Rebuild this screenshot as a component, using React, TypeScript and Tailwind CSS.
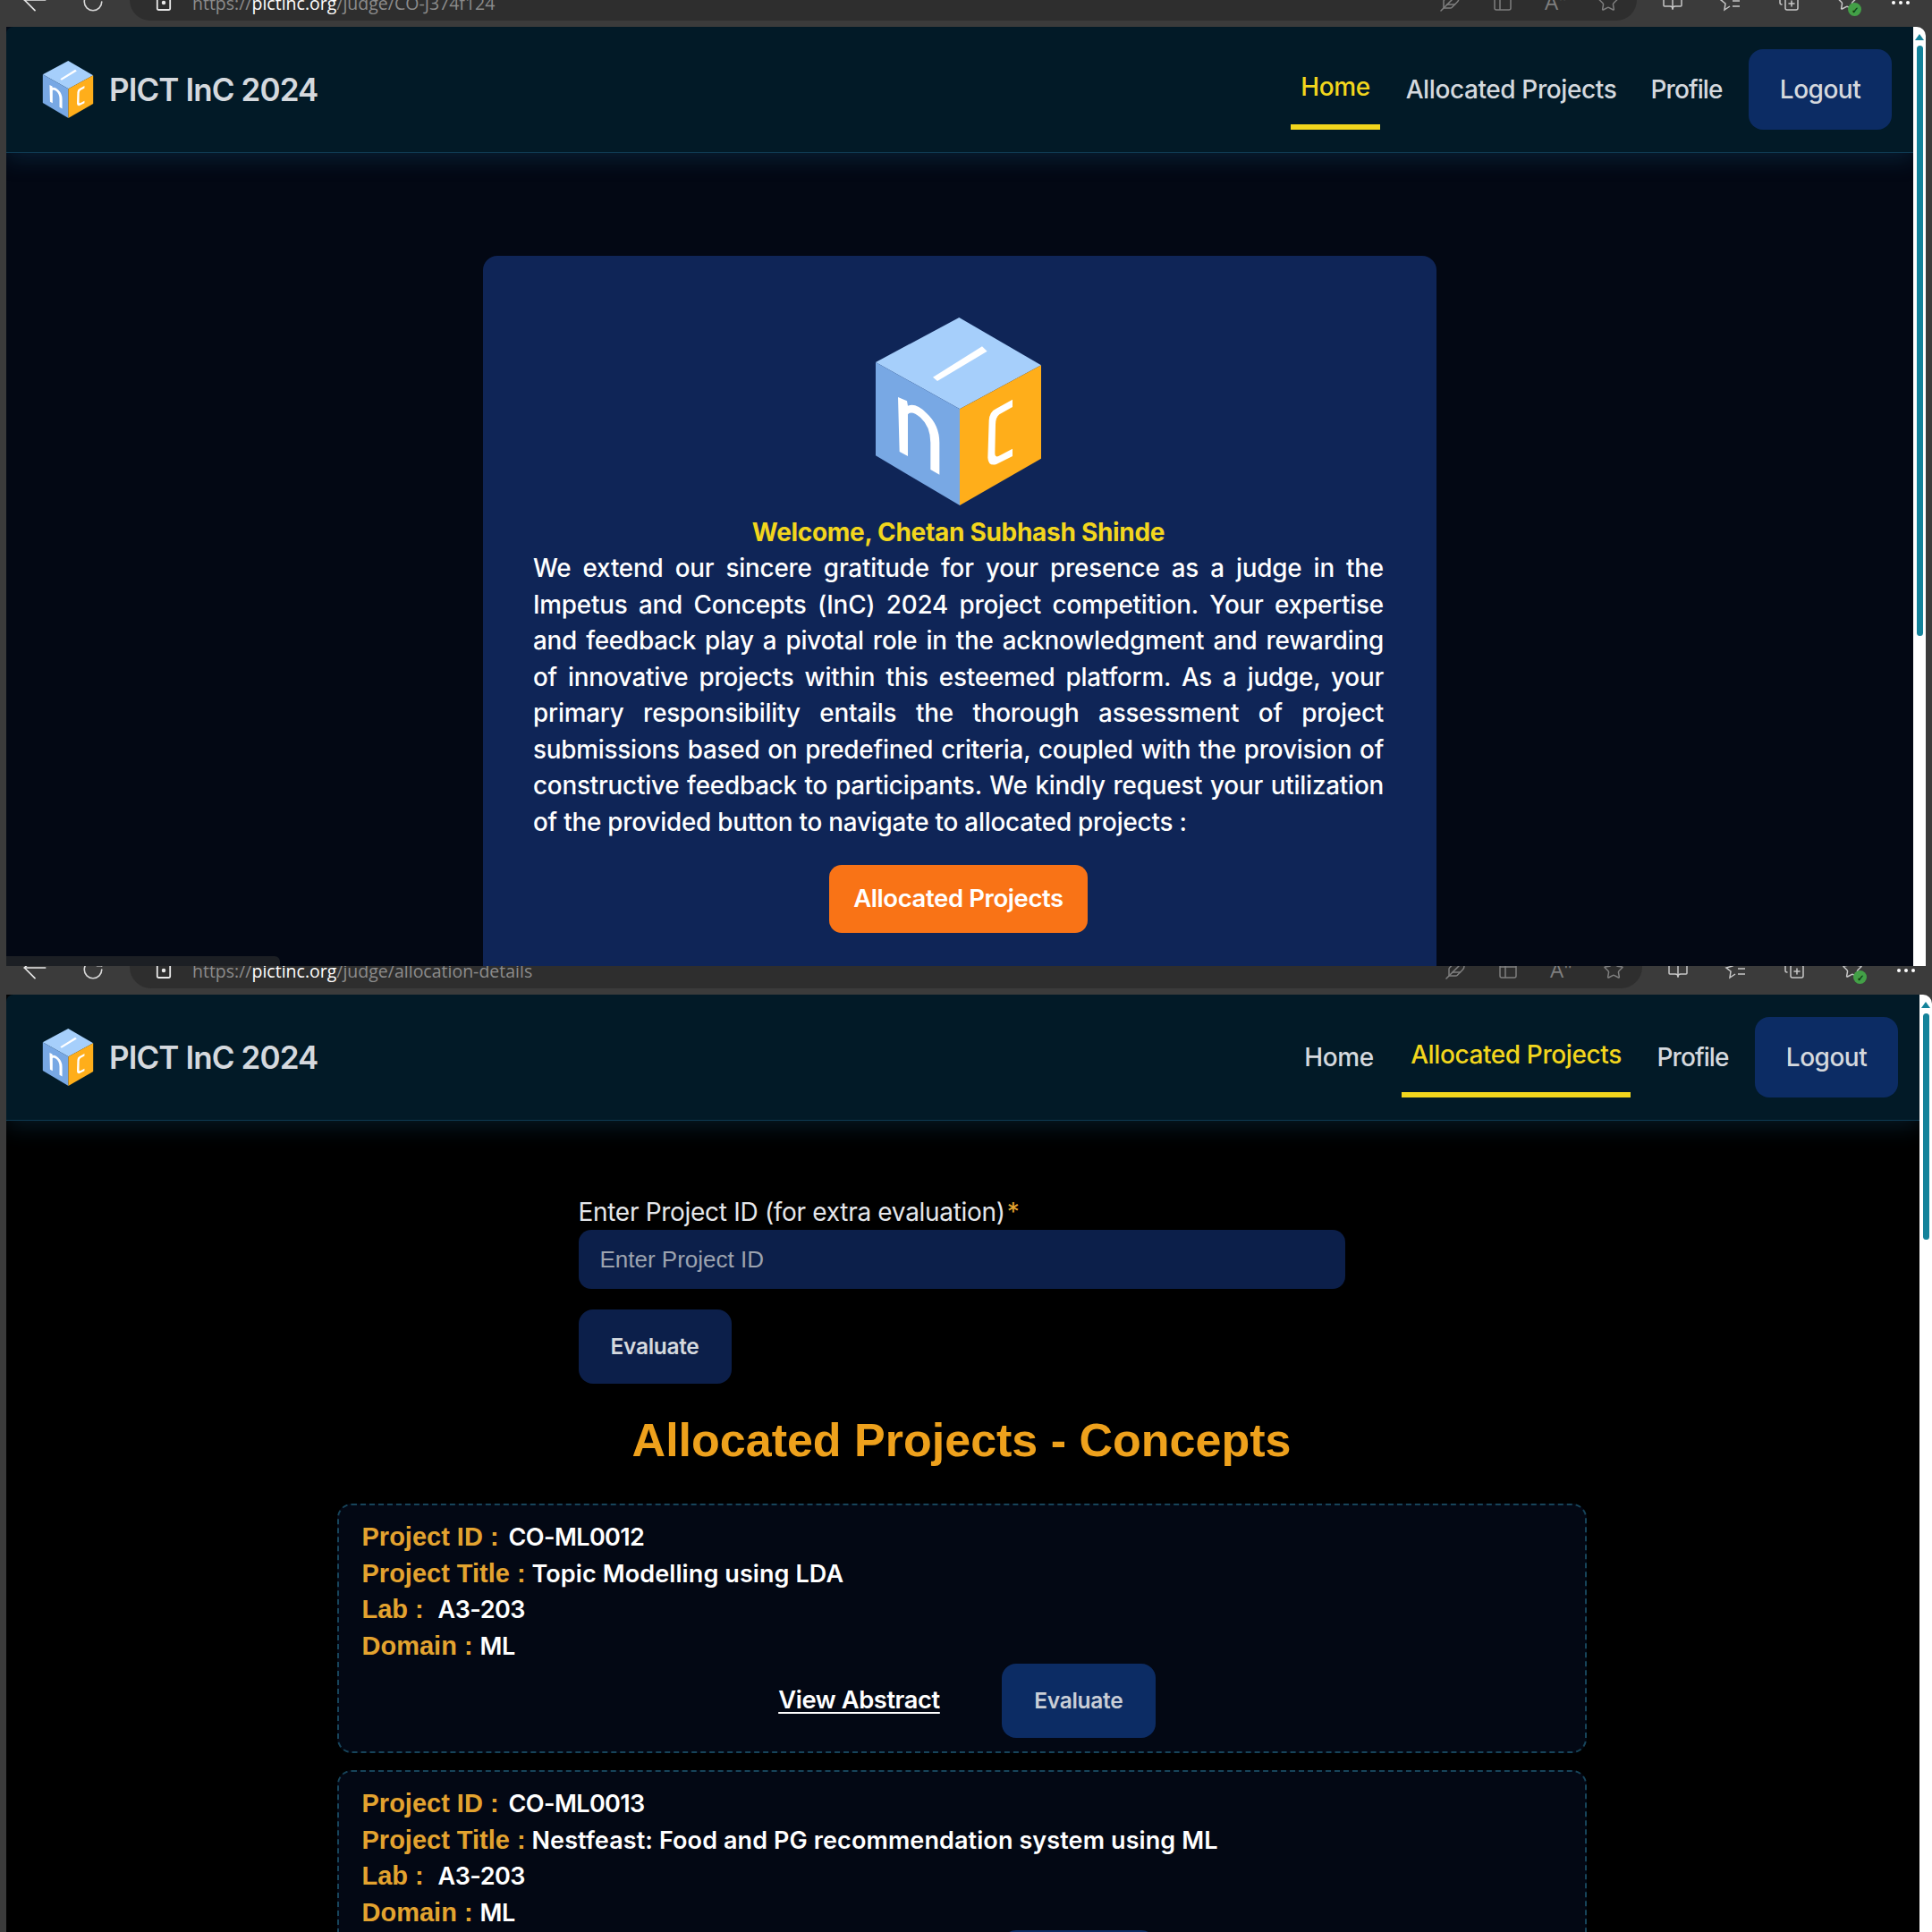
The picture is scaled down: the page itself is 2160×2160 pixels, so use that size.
import { ArrowLeft, BookOpen, CopyPlus, Feather, RotateCw, Star, Table2 } from 'lucide-react';

const paragraphLines = [
  'We extend our sincere gratitude for your presence as a judge in the',
  'Impetus and Concepts (InC) 2024 project competition. Your expertise',
  'and feedback play a pivotal role in the acknowledgment and rewarding',
  'of innovative projects within this esteemed platform. As a judge, your',
  'primary responsibility entails the thorough assessment of project',
  'submissions based on predefined criteria, coupled with the provision of',
  'constructive feedback to participants. We kindly request your utilization',
];

const projects = [
  { id: 'CO-ML0012', title: 'Topic Modelling using LDA' },
  { id: 'CO-ML0013', title: 'Nestfeast: Food and PG recommendation system using ML' },
];

function CubeLogo({ className }: { className: string }) {
  return (
    <svg viewBox="0 0 555 630" className={className}>
      <polygon points="280,0 0,150 282,307 555,160" fill="#a6cffb" />
      <polygon points="0,150 282,307 282,630 0,463" fill="#78a8e4" />
      <polygon points="282,307 555,160 555,473 282,630" fill="#ffae1a" />
      <polygon points="192,200 357,97 374,113 207,213" fill="#fff" />
      <path
        d="M75 267 L105 280 L108 296 Q135 285 170 320 Q214 360 214 420 L214 527 L184 510 L184 420 Q184 365 150 335 Q120 310 108 325 L108 465 L80 450 Z"
        fill="#fff"
      />
      <path
        d="M459 275 L459 300 L415 325 Q402 335 402 360 L400 455 Q400 470 412 465 L459 440 L459 465 L405 492 Q378 500 376 470 L380 345 Q382 315 405 305 Z"
        fill="#fff"
      />
    </svg>
  );
}

function BrowserChrome({ path, tall }: { path: string; tall?: boolean }) {
  return (
    <div className={`flex shrink-0 items-start overflow-hidden bg-[#3b3b3b] text-[#a8a8a8] ${tall ? 'h-[32px]' : 'h-[30px]'}`}>
      {/* back + reload */}
      <div className={`flex w-[145px] shrink-0 items-end pb-[10px] pl-[19px] ${tall ? 'h-[25px]' : 'h-[23px]'}`}>
        <ArrowLeft className="-mb-[7px] h-[40px] w-[40px] shrink-0 text-[#e8e8e8]" strokeWidth={1} />
        <RotateCw className="-mb-[2px] ml-[32px] h-[26px] w-[26px] shrink-0 text-[#d8d8d8]" strokeWidth={1.5} />
      </div>

      {/* address bar */}
      <div
        className={`flex min-w-0 flex-1 items-end rounded-b-[24px] bg-[#2e2e2e] pb-[9px] pl-[29px] pr-[20px] ${tall ? 'h-[25px]' : 'h-[23px]'}`}
      >
        <svg viewBox="0 0 20 24" className="h-[24px] w-[18px] shrink-0 text-[#e8e8e8]" fill="none" stroke="currentColor" strokeWidth="2">
          <rect x="2" y="2" width="16" height="20" rx="2" />
          <circle cx="10" cy="13" r="1.5" fill="currentColor" />
        </svg>
        <span className="ml-[23px] whitespace-nowrap text-[19.5px] leading-[20px] text-[#8c8c8c] [font-family:'Open_Sans',sans-serif]">
          https://<span className="text-white">pictinc.org</span>/judge/{path}
        </span>
        <div className="ml-auto flex items-center gap-[35px] text-[#7f7f7f]">
          <Feather className="h-[24px] w-[24px]" strokeWidth={1.5} />
          <Table2 className="h-[24px] w-[24px]" strokeWidth={1.5} />
          <span className="w-[24px] text-[24px] leading-[24px] [font-family:'Open_Sans',sans-serif]">A"</span>
          <Star className="h-[24px] w-[24px]" strokeWidth={1.5} />
        </div>
      </div>

      {/* extensions */}
      <div className={`flex shrink-0 items-end pb-[10px] pl-[28px] text-[#c8c8c8] ${tall ? 'h-[25px] w-[324px]' : 'h-[23px] w-[330px]'}`}>
        <BookOpen className="h-[24px] w-[24px]" strokeWidth={1.5} />
        <svg viewBox="0 0 24 24" className="ml-[40px] h-[24px] w-[24px]" fill="none" stroke="currentColor" strokeWidth="1.5">
          <path d="M7 2 L9 9 L2 11 L7 15 L6 22 L12 18" />
          <path d="M15 6 H23 M15 12 H23 M15 18 H23" />
        </svg>
        <CopyPlus className="ml-[42px] h-[24px] w-[24px]" strokeWidth={1.5} />
        <span className="relative ml-[41px] h-[24px] w-[24px]">
          <Star className="h-[24px] w-[24px]" strokeWidth={1.5} />
          <span className="absolute bottom-[-5px] right-[-4px] flex h-[15px] w-[15px] items-center justify-center rounded-full bg-[#43a047] text-[10px] font-bold leading-none text-[#0b3d12]">
            ✓
          </span>
        </span>
        <span className="ml-[38px] flex items-center gap-[4px] pb-[8px]">
          <span className="h-[4px] w-[4px] rounded-full bg-white" />
          <span className="h-[4px] w-[4px] rounded-full bg-white" />
          <span className="h-[4px] w-[4px] rounded-full bg-white" />
        </span>
      </div>
    </div>
  );
}

function NavBar({ active }: { active: 'home' | 'projects' }) {
  const linkBase = "flex h-[90px] items-center justify-center whitespace-nowrap text-[28px] font-medium tracking-[-0.4px] [font-family:Inter,sans-serif]";
  const on = 'border-b-[6px] border-[#f2d61d] text-[#f2d61d]';
  const off = 'text-[#d5d9de]';

  return (
    <nav className="relative z-10 flex h-[141px] shrink-0 items-center justify-between rounded-tl-[8px] border-b border-[#0f3a52] bg-[#021a27] pl-[40px] pr-[24px] shadow-[0_6px_26px_rgba(26,96,140,0.28)]">
      <div className="flex items-center gap-[17px]">
        <CubeLogo className="h-[64px] w-[58px]" />
        <span className="whitespace-nowrap text-[35px] font-semibold tracking-[-0.9px] text-[#d5d9de] [font-family:Inter,sans-serif]">
          PICT InC 2024
        </span>
      </div>
      <div className="flex items-center gap-[20px]">
        <a className={`w-[100px] ${linkBase} ${active === 'home' ? on : off}`}>Home</a>
        <a className={`${active === 'projects' ? 'w-[256px]' : 'w-[253px]'} ${linkBase} ${active === 'projects' ? on : off}`}>
          Allocated Projects
        </a>
        <a className={`w-[99px] ${linkBase} ${off} tracking-[-0.9px]`}>Profile</a>
        <button className="h-[90px] w-[160px] rounded-[16px] bg-[#0c2c64] text-[28px] font-medium tracking-[-0.5px] text-[#d5d9de] [font-family:Inter,sans-serif]">
          Logout
        </button>
      </div>
    </nav>
  );
}

function Scrollbar({ thumbHeight }: { thumbHeight: string }) {
  return (
    <div className="flex w-[14px] shrink-0 flex-col items-center rounded-tr-[10px] bg-white pt-[8px]">
      <div className="h-0 w-0 border-x-[5px] border-b-[7px] border-x-transparent border-b-[#14839b]" />
      <div className={`mt-[6px] w-[7px] rounded-full bg-[#14839b] ${thumbHeight}`} />
    </div>
  );
}

function ProjectCard({ id, title }: { id: string; title: string }) {
  const label = "text-[#e3a32f] text-[29px] font-bold [font-family:'Liberation_Sans',sans-serif]";
  const value = 'text-white text-[27px] font-semibold';
  const row = 'flex h-[40.5px] items-baseline';

  return (
    <div className="mx-auto mb-[19px] h-[279px] w-[1397px] shrink-0 rounded-[16px] border-2 border-dashed border-[#17445a] bg-[#030814] pl-[26px] pr-[14px] pt-[15px] [font-family:Inter,sans-serif]">
      <div className="leading-[40.5px]">
        <p className={row}>
          <span className={`${label} w-[164px]`}>Project ID :</span>
          <span className={`${value} tracking-[-0.6px]`}>{id}</span>
        </p>
        <p className={row}>
          <span className={`${label} w-[190px]`}>Project Title :</span>
          <span className={`${value} tracking-[0.1px]`}>{title}</span>
        </p>
        <p className={row}>
          <span className={`${label} w-[85px]`}>Lab :</span>
          <span className={`${value} tracking-[-0.5px]`}>A3-203</span>
        </p>
        <p className={row}>
          <span className={`${label} w-[132px]`}>Domain :</span>
          <span className={`${value} tracking-[-0.5px]`}>ML</span>
        </p>
      </div>
      <div className="flex items-center justify-center gap-[69px]">
        <a className="text-[27.3px] font-semibold tracking-[-0.4px] text-white underline underline-offset-4">View Abstract</a>
        <button className="h-[83px] w-[172px] rounded-[16px] bg-[#0c2c64] text-[24.5px] font-semibold tracking-[-0.3px] text-[#c9ced6]">
          Evaluate
        </button>
      </div>
    </div>
  );
}

export default function App() {
  return (
    <div className="h-[2160px] w-[2160px] overflow-hidden bg-[#3b3b3b]">
      {/* first capture: judge home */}
      <section className="relative flex h-[1080px] flex-col overflow-hidden">
        <BrowserChrome path="CO-J374f124" />
        <div className="flex min-h-0 flex-1 pl-[7px] pr-[7px]">
          <div className="flex min-w-0 flex-1 flex-col overflow-hidden bg-[#030814]">
            <NavBar active="home" />
            <main className="pl-[533px] pt-[115px]">
              <div className="flex h-[900px] w-[1066px] flex-col items-center rounded-[16px] bg-[#0f2557] pl-[56px] pr-[59px] pt-[69px] [font-family:Inter,sans-serif]">
                <CubeLogo className="h-[210px] w-[185px] shrink-0" />
                <h2 className="mt-[10px] whitespace-nowrap text-[28px] font-bold leading-[40px] tracking-[-0.3px] text-[#f2d61d]">
                  Welcome, Chetan Subhash Shinde
                </h2>
                <p className="w-full text-[27.8px] font-medium leading-[40.5px] tracking-[-0.2px] text-white">
                  {paragraphLines.map((line) => (
                    <span key={line} className="block whitespace-nowrap text-justify [text-align-last:justify]">
                      {line}
                    </span>
                  ))}
                  <span className="block whitespace-nowrap">of the provided button to navigate to allocated projects :</span>
                </p>
                <button className="mt-[28px] h-[76px] w-[289px] shrink-0 rounded-[14px] bg-[#f97316] text-[27.5px] font-semibold tracking-[-0.4px] text-white">
                  Allocated Projects
                </button>
              </div>
            </main>
          </div>
          <Scrollbar thumbHeight="h-[660px]" />
        </div>
        <div className="absolute bottom-0 left-[7px] h-[11px] w-[306px] rounded-tr-[6px] bg-[#1c1f24]" />
      </section>

      {/* second capture: allocated projects */}
      <section className="flex h-[1080px] flex-col overflow-hidden">
        <BrowserChrome path="allocation-details" tall />
        <div className="flex min-h-0 flex-1 pl-[7px]">
          <div className="flex min-w-0 flex-1 flex-col overflow-hidden bg-black">
            <NavBar active="projects" />
            <main className="pr-[3px] pt-[83px]">
              <div className="mx-auto w-[857px] [font-family:Inter,sans-serif]">
                <label className="block text-[28px] leading-[39px] tracking-[-0.3px] text-[#e5e7eb]">
                  Enter Project ID (for extra evaluation)<span className="ml-[2px] text-[#e3a32f]">*</span>
                </label>
                <input
                  placeholder="Enter Project ID"
                  className="block h-[66px] w-full rounded-[14px] bg-[#0c1f4a] px-[24px] text-[26px] text-white outline-none placeholder:text-[#9ca3af] [font-family:'Liberation_Sans',sans-serif]"
                />
                <button className="mt-[23px] block h-[83px] w-[171px] rounded-[16px] bg-[#0c1f4a] text-[24.5px] font-semibold tracking-[-0.3px] text-[#d5d9de]">
                  Evaluate
                </button>
              </div>
              <h1 className="mt-[33px] text-center text-[52px] font-bold leading-[60px] text-[#eea11c] [font-family:'Liberation_Sans',sans-serif]">
                Allocated Projects - Concepts
              </h1>
              <div className="mt-[41px]">
                {projects.map((project) => (
                  <ProjectCard key={project.id} id={project.id} title={project.title} />
                ))}
              </div>
            </main>
          </div>
          <Scrollbar thumbHeight="h-[253px]" />
        </div>
      </section>
    </div>
  );
}
